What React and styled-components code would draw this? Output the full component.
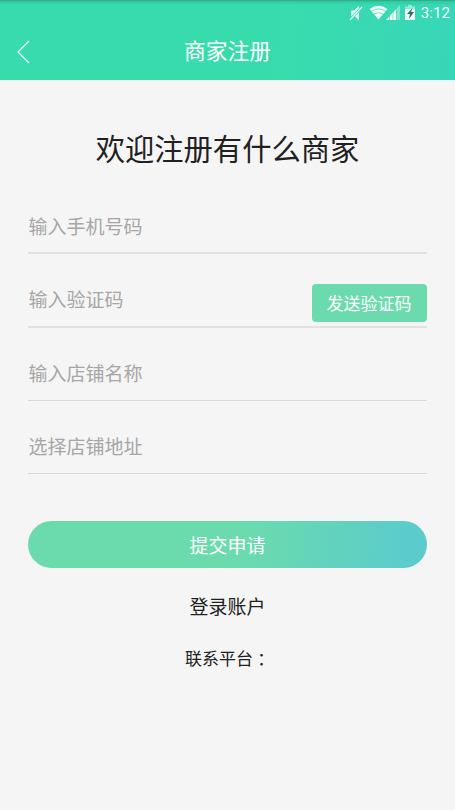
import React from 'react';
import styled, { createGlobalStyle } from 'styled-components';

const Global = createGlobalStyle`
  * { box-sizing: border-box; }
  body { margin: 0; background: #f5f5f5; font-family: "Noto Sans CJK SC", sans-serif; }
  button, input { font-family: inherit; border: 0; padding: 0; margin: 0; }
`;
const Screen = styled.div`
  width: 455px; height: 810px; background: #f5f5f5; color: #212121;
  display: flex; flex-direction: column; overflow: hidden;
`;
const Top = styled.header`
  height: 80px; flex: none; color: #fff;
  background: linear-gradient(95deg, #38dcac 0%, #38dcac 60%, #38d6b9 100%);
`;
const StatusBar = styled.div`
  height: 24px; display: flex; align-items: center; justify-content: flex-end;
  padding: 1px 5px 0 0;
  background: linear-gradient(#2fae89 0, #2fae89 1px, #34c79c 1px, #38dcac00 5px);
  font: 15.2px/24px Roboto, sans-serif; color: #effcf8;
`;
const StatusIcons = styled.svg`
  display: block; margin-right: 5px;
`;
const NavBar = styled.div`
  height: 53px; display: grid; grid-template-columns: 48px 1fr 48px; align-items: center;
`;
const Back = styled.button`
  background: none; color: inherit; height: 26px; padding-left: 16px; display: flex; margin-top: 2px;
`;
const Title = styled.h1`
  margin: 0 0 2px; font-size: 21.8px; font-weight: 400; line-height: 32px; text-align: center;
`;
const Main = styled.main`
  padding: 0 28px; display: flex; flex-direction: column;
`;
const Welcome = styled.h2`
  margin: 45px 0 11px; font-size: 29.3px; font-weight: 400; line-height: 44px; text-align: center;
`;
const Field = styled.div`
  height: ${p => p.$height}px; display: flex; align-items: flex-end;
  border-bottom: ${p => p.$line}px solid ${p => (p.$line > 1 ? '#e1e1e1' : '#d9d9d9')};
`;
const Input = styled.input`
  flex: 1; min-width: 0; height: 40px; margin-bottom: 8px; background: none; outline: 0; font-size: 19px;
  padding-left: 0.5px;
  ${Field}:first-of-type & { margin-bottom: 7px; }
  &::placeholder { color: #a6a6a6; opacity: 1; }
`;
const Send = styled.button`
  width: 115px; height: 38px; margin-bottom: 4px; padding-right: 1px; border-radius: 4px;
  background: #6bdbae; color: #fff; font-size: 17px; line-height: 38px;
`;
const Submit = styled.button`
  margin-top: 47px; height: 47px; border-radius: 24px; color: #fff; font-size: 19px; line-height: 47px;
  background: linear-gradient(92deg, #6bdbad 0%, #6bdbad 53%, #5bcccb 95%);
`;
const Note = styled.div`
  text-align: center; margin-top: ${p => p.$gap}px; font-size: ${p => p.$size}px; line-height: 28px;
`;
const Colon = styled.span`
  display: inline-block; padding-top: 1px; line-height: 27px; vertical-align: top;
  font-family: "Noto Sans CJK TC", sans-serif;
`;

const fields = [
  { hint: '输入手机号码', height: 74, line: 2 },
  { hint: '输入验证码', action: '发送验证码', height: 74, line: 2 },
  { hint: '输入店铺名称', height: 73, line: 1 },
  { hint: '选择店铺地址', height: 73, line: 1 },
];

export default function App() {
  return (
    <Screen>
      <Global />
      <Top>
        <StatusBar>
          <StatusIcons width="68" height="18" viewBox="348 3 68 18" fill="#effcf8">
            <path d="M351 9.500h3l5-4.500v14.500l-4-4h-4z" opacity=".9" />
            <path d="M350 19L362 6" stroke="#38dcac" strokeWidth="2.600" />
            <path d="M350 19L362 6" stroke="#effcf8" strokeWidth="1.200" />
            <path d="M369.500 8q9-6.500 18 0L378.500 18.500z" />
            <path d="M371 10.500q7.500-5 15 0M373.500 13.500q5-3.500 10 0" fill="none" stroke="#38dcac" strokeWidth=".7" />
            <path d="M386 19L400 4v15z" opacity=".4" />
            <path d="M386 19L396 8.300V19z" />
            <path d="M389.500 10v9M393 8v11M396.500 5v14" stroke="#38dcac" strokeWidth=".6" />
            <path d="M405 5.500h3V4h4v1.500h3V19h-10z" opacity=".5" />
            <path d="M405 8h10v11h-10z" />
            <path d="M412.500 7l-5.500 6h3l-1 5 5-7h-3z" fill="#26735c" />
          </StatusIcons>
          3:12
        </StatusBar>
        <NavBar>
          <Back aria-label="返回">
            <svg width="15" height="26" viewBox="0 0 15 26" fill="none" stroke="currentColor" strokeWidth="1.1"><path d="M13 2L2 13l11 11" /></svg>
          </Back>
          <Title>商家注册</Title>
        </NavBar>
      </Top>
      <Main>
        <Welcome>欢迎注册有什么商家</Welcome>
        {fields.map(f => (
          <Field key={f.hint} $height={f.height} $line={f.line}>
            <Input placeholder={f.hint} />
            {f.action && <Send>{f.action}</Send>}
          </Field>
        ))}
        <Submit>提交申请</Submit>
        <Note $gap={24} $size={19}>登录账户</Note>
        <Note $gap={24} $size={17}>联系平台<Colon lang="zh-TW">：</Colon></Note>
      </Main>
    </Screen>
  );
}
